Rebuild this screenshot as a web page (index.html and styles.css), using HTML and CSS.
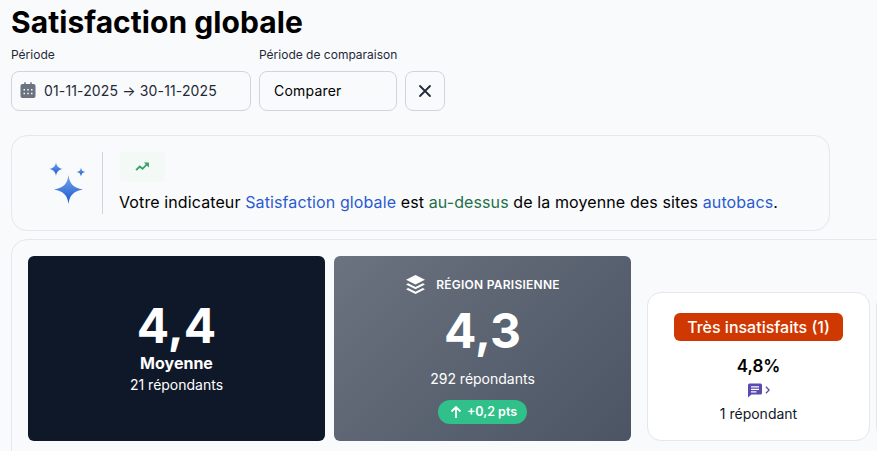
FILE: index.html
```html
<!DOCTYPE html>
<html lang="fr">

<head>
    <meta charset="UTF-8">
    <meta name="viewport" content="width=device-width, initial-scale=1.0">
    <title>Satisfaction globale</title>
    <link rel="stylesheet" href="styles.css">
</head>

<body>
    <h1 class="title">Satisfaction globale</h1>

    <div class="filters">
        <div class="field">
            <span class="field-label">Période</span>
            <div class="input input-date">
                <svg class="icon-calendar" viewBox="0 0 24 24" width="18" height="18">
                    <path fill="#6b7280" d="M7 1.500h2V4h6V1.500h2V4h2.500A2.500 2.500 0 0 1 22 6.500V20a2.500 2.500 0 0 1-2.500 2.500h-15A2.500 2.500 0 0 1 2 20V6.500A2.500 2.500 0 0 1 4.500 4H7zM6 10.500v2h2v-2zm5 0v2h2v-2zm5 0v2h2v-2zM6 15.500v2h2v-2zm5 0v2h2v-2zm5 0v2h2v-2z"/>
                </svg>
                <span>01-11-2025 → 30-11-2025</span>
            </div>
        </div>
        <div class="field">
            <span class="field-label">Période de comparaison</span>
            <div class="input input-compare"><span>Comparer</span></div>
        </div>
        <button class="btn-clear">
            <svg viewBox="0 0 16 16" width="16" height="16">
                <path d="M3 3l10 10M13 3L3 13" stroke="#1f2937" stroke-width="1.800" stroke-linecap="round"/>
            </svg>
        </button>
    </div>

    <div class="insight">
        <div class="insight-stars">
            <svg viewBox="0 0 40 46" width="40" height="46">
                <defs>
                    <linearGradient id="star" x1="0" y1="0" x2="0" y2="1">
                        <stop offset="0" stop-color="#7ba6e8"/>
                        <stop offset="1" stop-color="#1257cf"/>
                    </linearGradient>
                </defs>
                <path fill="url(#star)" d="M8 2c.5 4 2.500 6.200 7 7-4.500.8-6.500 3-7 7-.5-4-2.500-6.200-7-7 4.500-.8 6.500-3 7-7z"/>
                <path fill="url(#star)" d="M33 7.500c.4 2.800 1.700 4.100 4.500 4.500-2.800.4-4.100 1.700-4.500 4.500-.4-2.800-1.700-4.100-4.500-4.500 2.800-.4 4.100-1.700 4.500-4.500z"/>
                <path fill="url(#star)" d="M20.500 15c1 8.500 5 13 14.500 14.500C25.500 31 21.500 35.500 20.500 44c-1-8.500-5-13-14.500-14.500C15.500 28 19.500 23.500 20.500 15z"/>
            </svg>
        </div>
        <div class="insight-body">
            <div class="trend">
                <svg viewBox="0 0 16 12" width="15" height="11">
                    <path d="M1 10l4-4 3 2.500L13 3.500" fill="none" stroke="#38a169" stroke-width="2"/>
                    <path d="M9.500 1.500H15V7z" fill="#38a169"/>
                </svg>
            </div>
            <p class="insight-text">Votre indicateur <span class="txt-blue">Satisfaction globale</span> est <span class="txt-green">au-dessus</span> de la moyenne des sites <span class="txt-blue">autobacs</span>.</p>
        </div>
    </div>

    <div class="panel">
        <div class="score score-dark">
            <div class="score-value">4,4</div>
            <div class="score-name">Moyenne</div>
            <div class="score-count">21 répondants</div>
        </div>

        <div class="score score-grey">
            <div class="score-region">
                <svg viewBox="0 0 20 20" width="21" height="21">
                    <path fill="#fff" d="M10 1l9 4.500-9 4.500-9-4.500z"/>
                    <path fill="#fff" d="M3 8.900l7 3.500 7-3.500 2 1.100-9 4.500-9-4.500z"/>
                    <path fill="#fff" d="M3 13.400l7 3.500 7-3.500 2 1.100-9 4.500-9-4.500z"/>
                </svg>
                <span>RÉGION PARISIENNE</span>
            </div>
            <div class="score-value">4,3</div>
            <div class="score-count score-count-grey">292 répondants</div>
            <div class="delta">
                <svg viewBox="0 0 12 14" width="12" height="14">
                    <path d="M6 13V2M1.500 6.500L6 2l4.500 4.500" fill="none" stroke="#fff" stroke-width="1.800"/>
                </svg>
                <span>+0,2 pts</span>
            </div>
        </div>

        <div class="group">
            <div class="group-card">
                <div class="group-tag">Très insatisfaits (1)</div>
                <div class="group-pct">4,8%</div>
                <div class="group-link">
                    <svg viewBox="0 0 16 16" width="16" height="16">
                        <path fill="#5b4bb0" fill-rule="evenodd" d="M2.500 1.500h11A1.500 1.500 0 0 1 15 3v8a1.500 1.500 0 0 1-1.500 1.500H4.500L1 15.500V3a1.500 1.500 0 0 1 1.500-1.500zM4 4.200v1.300h8V4.200zm0 2.500V8h8V6.700zm0 2.500v1.300h5.500V9.200z"/>
                    </svg>
                    <svg viewBox="0 0 6 10" width="5" height="8">
                        <path d="M1 1l4 4-4 4" fill="none" stroke="#5b4bb0" stroke-width="1.600"/>
                    </svg>
                </div>
                <div class="group-count">1 répondant</div>
            </div>
            <div class="group-card"></div>
        </div>
    </div>
</body>

</html>
```

FILE: styles.css
```css
html,
body {
    height: 451px;
    overflow: hidden;
}

body {
    margin: 0;
    padding: 0 0 0 11px;
    background: #f9fafc;
    color: #000;
    font-family: Inter, sans-serif;
    width: 1400px;
}

.title {
    margin: 0;
    font-size: 30px;
    line-height: 45px;
    letter-spacing: 0.05px;
    font-weight: 700;
}

.filters {
    display: flex;
    align-items: flex-end;
    gap: 8px;
    margin-top: 1px;
}

.field {
    display: flex;
    flex-direction: column;
}

.field-label {
    font-size: 12px;
    line-height: 18px;
    color: #1f2937;
    margin-bottom: 7px;
}

.input {
    height: 40px;
    box-sizing: border-box;
    padding-bottom: 2px;
    display: flex;
    align-items: center;
    border: 1px solid #d1d5db;
    border-radius: 8px;
    background: #f9fafc;
    font-size: 14px;
}

.input-date {
    width: 240px;
    padding-left: 7px;
    gap: 7px;
    color: #1f2937;
    letter-spacing: 0.14px;
}

.input-compare {
    width: 138px;
    padding-left: 14px;
    letter-spacing: 0.2px;
    font-weight: 400;
}

.btn-clear {
    width: 40px;
    height: 40px;
    padding: 0;
    display: flex;
    align-items: center;
    justify-content: center;
    border: 1px solid #d1d5db;
    border-radius: 8px;
    background: #f9fafc;
}

.insight {
    width: 819px;
    height: 96px;
    box-sizing: border-box;
    margin-top: 24px;
    display: flex;
    align-items: center;
    border: 1px solid #e5e7eb;
    border-radius: 16px;
}

.insight-stars {
    width: 91px;
    height: 62px;
    box-sizing: border-box;
    padding-left: 36px;
    display: flex;
    align-items: center;
    border-right: 1px solid #d1d5db;
}

.insight-body {
    margin-left: 16px;
}

.trend {
    width: 45px;
    height: 30px;
    margin-left: 1px;
    display: flex;
    align-items: center;
    justify-content: center;
    background: #f3faf6;
    border-radius: 4px;
}

.insight-text {
    margin: 8px 0 1px;
    font-size: 16px;
    line-height: 24px;
    letter-spacing: 0.11px;
    font-weight: 400;
}

.txt-blue {
    color: #2a5bd0;
}

.txt-green {
    color: #1f7048;
}

.panel {
    margin-top: 8px;
    box-sizing: border-box;
    height: 260px;
    padding: 16px;
    display: flex;
    align-items: flex-start;
    gap: 9px;
    border: 1px solid #e5e7eb;
    border-radius: 16px;
}

.score {
    width: 297px;
    height: 185px;
    box-sizing: border-box;
    display: flex;
    flex-direction: column;
    align-items: center;
    justify-content: center;
    border-radius: 6px;
    color: #fff;
}

.score-dark {
    background: #0f1829;
    padding-top: 4px;
}

.score-grey {
    background: linear-gradient(135deg, #6b7280, #4b5563);
}

.score-value {
    font-size: 48px;
    line-height: 40px;
    font-weight: 700;
}

.score-name {
    font-size: 16px;
    line-height: 24px;
    font-weight: 700;
    margin-top: 5px;
}

.score-count {
    font-size: 14px;
    line-height: 20px;
}

.score-region {
    display: flex;
    align-items: center;
    gap: 10px;
    font-size: 12px;
    letter-spacing: 0.25px;
    font-weight: 600;
}

.score-grey .score-value {
    margin-top: 16px;
}

.score-count-grey {
    margin-top: 18px;
}

.delta {
    display: flex;
    align-items: center;
    gap: 5px;
    margin-top: 11px;
    height: 24px;
    padding: 0 10px 0 12px;
    border-radius: 12px;
    background: #30c08a;
    font-size: 12.500px;
    font-weight: 600;
}

.group {
    display: flex;
    gap: 6px;
    margin-left: 7px;
    margin-top: 36px;
}

.group-card {
    width: 223px;
    height: 149px;
    box-sizing: border-box;
    padding-top: 20px;
    display: flex;
    flex-direction: column;
    align-items: center;
    background: #fff;
    border: 1px solid #e5e7eb;
    border-radius: 14px;
}

.group-tag {
    width: 169px;
    height: 28px;
    display: flex;
    align-items: center;
    justify-content: center;
    background: #d03801;
    border-radius: 6px;
    color: #fff;
    font-size: 16px;
    font-weight: 500;
}

.group-pct {
    margin-top: 13px;
    font-size: 17px;
    line-height: 24px;
    font-weight: 600;
}

.group-link {
    display: flex;
    align-items: center;
    gap: 2px;
    height: 18px;
    margin-top: 3px;
}

.group-count {
    margin-top: 5px;
    font-size: 14px;
    line-height: 20px;
    color: #111827;
}
```
